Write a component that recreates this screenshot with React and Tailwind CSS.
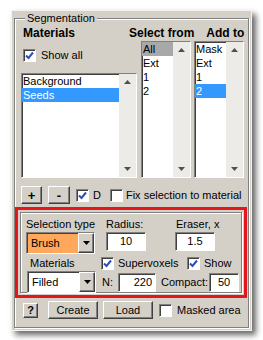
import React from 'react'

const sunkenBorder =
  'border border-t-[#808080] border-l-[#808080] border-b-white border-r-white shadow-[inset_1px_1px_0_#404040]'
const sunken = `bg-white ${sunkenBorder}`
const raised =
  'bg-[#d4d0c8] border border-t-white border-l-white border-b-[#404040] border-r-[#404040] shadow-[inset_-1px_-1px_0_#808080]'

function Check({ checked }) {
  return (
    <span className={`inline-flex items-center justify-center w-[13px] h-[13px] shrink-0 ${sunken}`}>
      {checked && (
        <svg width="9" height="9" viewBox="0 0 9 9">
          <path d="M1 4.5 L3.5 7 L8 1.5" fill="none" stroke="#2b4fb8" strokeWidth="2" />
        </svg>
      )}
    </span>
  )
}

function Arrow({ up, color = '#505050' }) {
  return (
    <svg width="7" height="4" viewBox="0 0 7 4">
      <path d={up ? 'M0 4 L3.5 0 L7 4 Z' : 'M0 0 L7 0 L3.5 4 Z'} fill={color} />
    </svg>
  )
}

function ListBox({ items, selected, selStyle = 'blue', className = '' }) {
  return (
    <div className={`flex ${sunken} ${className}`}>
      <div className="flex-1 flex flex-col">
        {items.map((it, i) => (
          <div
            key={it}
            className={
              'h-[14px] leading-[14px] pl-[1px] ' +
              (i === selected
                ? selStyle === 'blue'
                  ? 'bg-[#3399ff] text-white'
                  : 'bg-[#a8a8a8] text-black'
                : 'text-black')
            }
          >
            {it}
          </div>
        ))}
      </div>
      <div className="w-[17px] bg-[#edebe7] flex flex-col items-center justify-between py-[6px]">
        <Arrow up />
        <Arrow />
      </div>
    </div>
  )
}

function Select({ value, orange }) {
  return (
    <div className={`flex h-[22px] w-[69px] ${sunkenBorder} ${orange ? 'bg-[#ffa75a]' : 'bg-white'}`}>
      <span className="flex-1 pl-[4px] leading-[20px]">{value}</span>
      <span className={`w-[16px] flex items-center justify-center ${raised}`}>
        <Arrow color="#000" />
      </span>
    </div>
  )
}

function Field({ value, w, align = 'text-center' }) {
  return (
    <div className={`h-[19px] ${w} ${sunken} ${align} leading-[17px] px-[3px]`}>{value}</div>
  )
}

export default function App() {
  return (
    <div className="w-[263px] h-[340px] bg-white pl-[11px] pt-[10px] font-['Liberation_Sans',Arial,sans-serif] text-[11px] text-black whitespace-nowrap">
      <div className="w-[241px] h-[321px] bg-[#d4d0c8] border border-[#f4f3f0] shadow-[4px_4px_6px_rgba(0,0,0,0.6)] px-[2px] pt-[1px]">
        <fieldset className="border border-[#808080] shadow-[inset_1px_1px_0_white,1px_1px_0_white] px-[6px] pb-[6px] h-[316px] min-w-0">
          <legend className="ml-[4px] px-[2px] bg-[#d4d0c8] leading-[12px]">Segmentation</legend>

          <div className="flex items-end pl-[2px] pt-[2px] text-[12px] font-bold leading-[14px]">
            <span className="w-[106px] shrink-0">Materials</span>
            <span className="shrink-0">Select from</span>
            <span className="ml-[12px] shrink-0">Add to</span>
          </div>

          <div className="flex mt-[1px]">
            <div className="w-[116px] shrink-0 flex flex-col">
              <div className="flex items-center gap-[5px] h-[13px] mt-[8px] pl-[2px]">
                <Check checked />
                <span>Show all</span>
              </div>
              <ListBox items={['Background', 'Seeds']} selected={1} className="mt-[11px] h-[105px]" />
            </div>
            <div className="flex gap-[3px] ml-[4px]">
              <ListBox items={['All', 'Ext', '1', '2']} selected={0} selStyle="gray" className="w-[50px] h-[137px]" />
              <ListBox items={['Mask', 'Ext', '1', '2']} selected={3} className="w-[50px] h-[137px]" />
            </div>
          </div>

          <div className="flex items-center mt-[8px] h-[18px]">
            <button className={`w-[21px] h-[18px] ${raised} text-[13px] font-bold leading-none`}>+</button>
            <button className={`w-[22px] h-[18px] ml-[6px] ${raised} text-[13px] font-bold leading-none`}>-</button>
            <span className="ml-[6px] flex"><Check checked /></span>
            <span className="ml-[4px]">D</span>
            <span className="ml-[9px] flex"><Check /></span>
            <span className="ml-[3px]">Fix selection to material</span>
          </div>

          <div className="-ml-[6px] -mr-[5px] mt-[3px] border-[3px] border-[#e5161b] p-[2px]">
            <div className="border border-[#808080] shadow-[inset_1px_1px_0_white,1px_1px_0_white] pl-[5px] pt-[4px] h-[81px]">
              <div className="flex h-[14px] leading-[14px]">
                <span className="w-[80px]">Selection type</span>
                <span className="w-[70px]">Radius:</span>
                <span>Eraser, x</span>
              </div>
              <div className="flex items-start mt-[1px]">
                <Select value="Brush" orange />
                <span className="ml-[11px]"><Field value="10" w="w-[40px]" /></span>
                <span className="ml-[29px]"><Field value="1.5" w="w-[40px]" /></span>
              </div>
              <div className="flex items-center h-[14px] mt-[2px]">
                <span className="w-[75px] pl-[4px]">Materials</span>
                <Check checked />
                <span className="ml-[4px] w-[69px]">Supervoxels</span>
                <Check checked />
                <span className="ml-[4px]">Show</span>
              </div>
              <div className="flex items-center mt-[1px]">
                <span className="ml-[1px]"><Select value="Filled" /></span>
                <span className="ml-[6px] w-[16px]">N:</span>
                <Field value="220" w="w-[38px]" align="text-right" />
                <span className="ml-[5px] w-[48px]">Compact:</span>
                <Field value="50" w="w-[30px]" />
              </div>
            </div>
          </div>

          <div className="flex items-center mt-[3px] h-[18px]">
            <button className={`ml-[2px] w-[15px] h-[15px] ${raised} text-[11px] font-bold leading-none`}>?</button>
            <button className={`ml-[10px] w-[50px] h-[18px] ${raised}`}>Create</button>
            <button className={`ml-[5px] w-[50px] h-[18px] ${raised}`}>Load</button>
            <span className="ml-[6px] flex"><Check /></span>
            <span className="ml-[5px]">Masked area</span>
          </div>
        </fieldset>
      </div>
    </div>
  )
}
